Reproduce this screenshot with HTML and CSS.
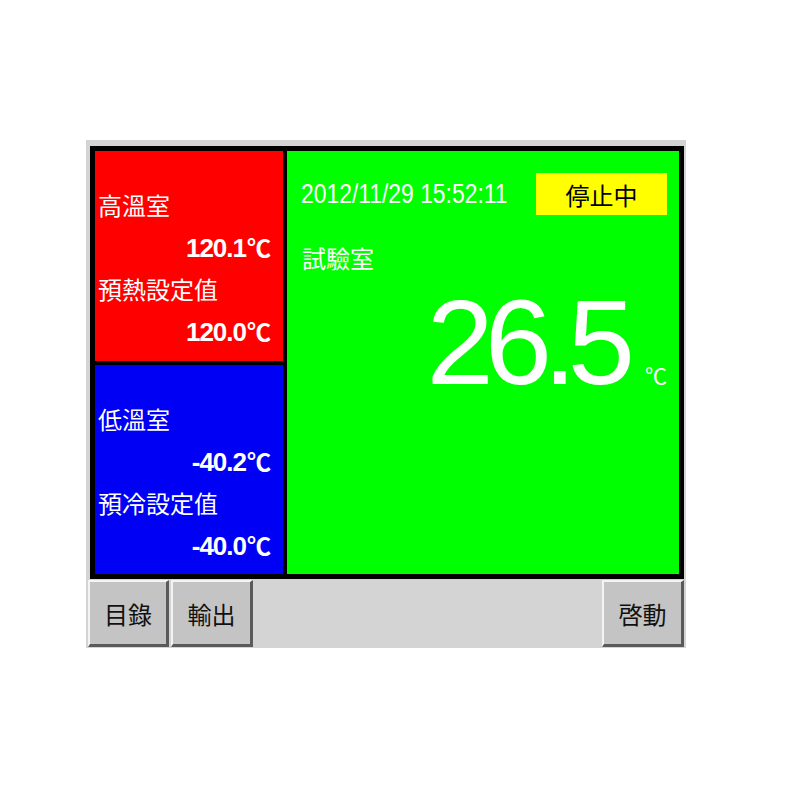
FILE: index.html
```html
<!DOCTYPE html>
<html lang="ja">
<head>
<meta charset="utf-8">
<title>試驗室</title>
<link rel="stylesheet" href="styles.css">
</head>
<body>
<div class="device">
  <div class="frame">
    <div class="side">
      <div class="zone zone-hot">
        <div class="row label">高溫室</div>
        <div class="row value">120.1<span class="deg">℃</span></div>
        <div class="row label">預熱設定值</div>
        <div class="row value">120.0<span class="deg">℃</span></div>
      </div>
      <div class="zone zone-cold">
        <div class="row label">低溫室</div>
        <div class="row value">-40.2<span class="deg">℃</span></div>
        <div class="row label">預冷設定值</div>
        <div class="row value">-40.0<span class="deg">℃</span></div>
      </div>
    </div>
    <div class="main">
      <div class="head">
        <div class="date-box"><span class="date">2012/11/29 15:52:11</span></div>
        <span class="status">停止中</span>
      </div>
      <div class="chamber">試驗室</div>
      <div class="reading">
        <span class="big">26.5</span>
        <span class="unit">℃</span>
      </div>
    </div>
  </div>
  <div class="buttons">
    <div class="btn btn-a">目錄</div>
    <div class="btn btn-b">輸出</div>
    <div class="btn btn-c">啓動</div>
  </div>
</div>
</body>
</html>
```

FILE: styles.css
```css
html, body {
  margin: 0;
  padding: 0;
  background: #ffffff;
}

body {
  font-family: "Noto Sans CJK JP", "Noto Sans CJK TC", sans-serif;
}

.device {
  margin: 140px 0 0 86px;
  width: 600px;
  height: 508px;
  box-sizing: border-box;
  padding: 6px 2px 0 4px;
  background: #d4d4d4;
}

.frame {
  width: 594px;
  height: 433px;
  box-sizing: border-box;
  border: 5px solid #000;
  background: #000;
  display: flex;
  gap: 4px;
}

.side {
  flex: 0 0 188px;
  width: 188px;
  display: flex;
  flex-direction: column;
  gap: 4px;
}

.zone {
  padding-top: 33px;
  box-sizing: border-box;
  color: #fff;
}

.zone-hot {
  height: 210px;
  flex: 0 0 210px;
  background: #ff0000;
}

.zone-cold {
  flex: 1;
  background: #0000f4;
}

.row {
  height: 42px;
  line-height: 42px;
  white-space: nowrap;
}

.label {
  font-size: 24px;
  padding-left: 3px;
}

.value {
  text-align: right;
  padding-right: 12px;
  font-family: "Liberation Sans", "Noto Sans CJK JP", sans-serif;
  font-weight: bold;
  font-size: 26px;
  letter-spacing: -1px;
}

.deg {
  font-family: "Noto Sans CJK JP", sans-serif;
  font-weight: bold;
  font-size: 24px;
  letter-spacing: 0;
  margin-left: 1px;
}

.main {
  flex: 1 1 0;
  min-width: 0;
  background: #00ff00;
  color: #fff;
  display: flex;
  flex-direction: column;
}

.head {
  margin-top: 22px;
  height: 42px;
  display: flex;
  align-items: center;
  padding: 0 12px 0 14px;
}

.date-box {
  flex: 1 1 0;
  min-width: 0;
  height: 42px;
}

.date {
  display: inline-block;
  font-family: "Liberation Sans", sans-serif;
  font-size: 28px;
  line-height: 42px;
  white-space: nowrap;
  transform: scaleX(0.817);
  transform-origin: left center;
}

.status {
  flex: 0 0 131px;
  width: 131px;
  height: 42px;
  background: #ffff00;
  color: #000;
  font-size: 24px;
  display: flex;
  align-items: center;
  justify-content: center;
}

.chamber {
  margin-top: 22px;
  height: 42px;
  line-height: 42px;
  font-size: 24px;
  padding-left: 15px;
}

.reading {
  margin-top: 3px;
  display: flex;
  justify-content: flex-end;
  align-items: baseline;
  padding-right: 12px;
}

.big {
  font-family: "Liberation Sans", sans-serif;
  font-size: 121px;
  line-height: 1;
  letter-spacing: -9px;
}

.unit {
  font-size: 22px;
  margin-left: 19px;
}

.buttons {
  margin: 1px 0 0 -2px;
  height: 67px;
  display: flex;
  gap: 2px;
}

.btn {
  box-sizing: border-box;
  height: 67px;
  background: #c4c4c4;
  border-style: solid;
  border-width: 2px 3px 3px 2px;
  border-color: #f4f4f4 #5a5a5a #5a5a5a #f4f4f4;
  color: #111;
  font-size: 24px;
  display: flex;
  align-items: center;
  justify-content: center;
}

.btn-a {
  width: 81px;
}

.btn-b {
  width: 82px;
}

.btn-c {
  width: 82px;
  margin-left: auto;
}
```
